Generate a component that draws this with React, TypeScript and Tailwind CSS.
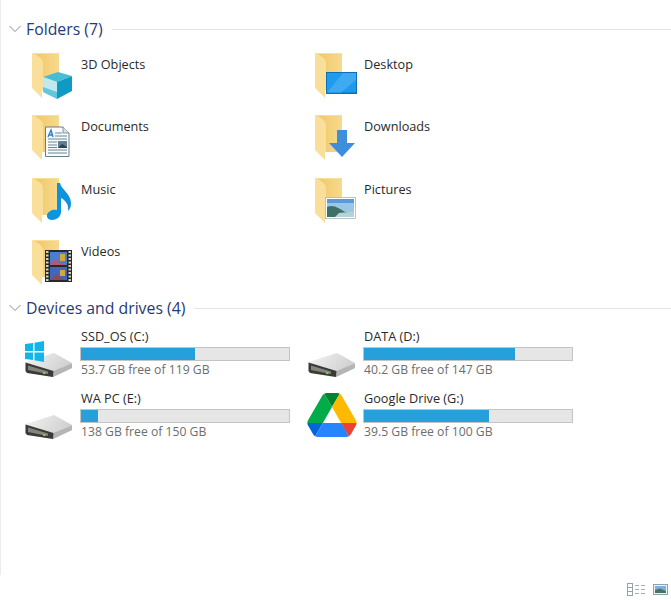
import React from "react";

function FolderBase() {
  return (
    <>
      <defs>
        <linearGradient id="panel" x1="0" y1="0" x2="1" y2="0">
          <stop offset="0" stopColor="#f0c768" />
          <stop offset="1" stopColor="#f7da8e" />
        </linearGradient>
      </defs>
      <path d="M2 3 H29 V40 H12 V48 L2 38 Z" fill="#f9df9a" />
      <path d="M5 4 H29 V40 H13 V13 C13 9 9 6.5 5 4 Z" fill="url(#panel)" />
    </>
  );
}

function Overlay({ kind }: { kind: string }) {
  switch (kind) {
    case "3d":
      return (
        <>
          <path d="M13 27 L28 22 L42 26 L27 32 Z" fill="#45bdd5" />
          <path d="M13 27 L27 32 L27 49 L13 42 Z" fill="#bfe8ef" />
          <path d="M27 32 L42 26 L42 41 L27 49 Z" fill="#0f9ac4" />
          <path d="M13 37 L27 42 L27 49 L13 42 Z" fill="#63c6da" />
        </>
      );
    case "desktop":
      return (
        <>
          <rect x="13" y="22" width="31" height="22" fill="#0f6fb5" />
          <rect x="14" y="23" width="29" height="19.5" fill="#1e9bed" />
          <path d="M14 42.5 L30 23 L43 23 L43 30 L28 42.5 Z" fill="#3daaf2" />
        </>
      );
    case "documents":
      return (
        <>
          <path d="M15.5 15 L33 15 L39 21 L39 44.5 L15.5 44.5 Z" fill="#f7fbfd" stroke="#5c6f7e" strokeWidth="0.9" />
          <path d="M33 15 L33 21 L39 21" fill="#d9e4ea" stroke="#5c6f7e" strokeWidth="0.7" />
          <path d="M18 25 L21 18 L23 25 M19 23 L22.5 23" fill="none" stroke="#2f7fc8" strokeWidth="1.4" />
          <path d="M25 21 H32 M25 24 H37 M18 27 H37 M18 38 H37 M18 41 H37" stroke="#6d8594" strokeWidth="1" />
          <path d="M18 30 H27 M18 33 H27 M18 35.5 H27" stroke="#6d8594" strokeWidth="1" />
          <rect x="28" y="29" width="9" height="7" fill="#5f7f96" />
          <path d="M28 36 L32 32 L37 35 L37 36 Z" fill="#2d4250" />
        </>
      );
    case "downloads":
      return <path d="M24 18 H34 V31 H42 L29 45 L16 31 H24 Z" fill="#3d8fdc" />;
    case "music":
      return (
        <path d="M27 8 L30 8 C31 14 41 19 41 28 C41 32 40 34 38 36 C39 29 35 25 31 23 L31 37 C31 42 26 45 22 45 C18 45 16.5 42 17 40 C18 36 23 34 27 35 Z" fill="#0d94df" />
      );
    case "videos":
      return (
        <>
          <rect x="15" y="13" width="27" height="32" fill="#27282a" />
          <rect x="20" y="15" width="17" height="13" fill="#4a7ed0" />
          <rect x="20" y="30" width="17" height="13" fill="#3f68bc" />
          <path d="M20 28 L25 22 L30 26 L37 28 Z" fill="#b25a74" />
          <rect x="30" y="17" width="5" height="7" fill="#d1aa3a" />
          <path d="M20 43 L26 37 L31 41 L37 43 Z" fill="#8e4a5b" />
          <rect x="30" y="33" width="5" height="6" fill="#d1aa3a" />
          {[14, 17.5, 21, 24.5, 28, 31.5, 35, 38.5, 42].map((y) => (
            <React.Fragment key={y}>
              <rect x="16" y={y} width="2.5" height="2" fill="#d8d2b8" />
              <rect x="38.5" y={y} width="2.5" height="2" fill="#d8d2b8" />
            </React.Fragment>
          ))}
        </>
      );
    case "pictures":
      return (
        <>
          <rect x="12.5" y="22.5" width="30" height="21" fill="#ffffff" stroke="#a9b6c0" strokeWidth="0.8" />
          <rect x="14" y="24" width="27" height="18" fill="#9cc6e4" />
          <path d="M14 24 H41 V28 H14 Z" fill="#5a9ad8" />
          <path d="M14 32 C20 29 26 33 32 37 L41 38 V42 H14 Z" fill="#3f7068" />
          <path d="M26 38 L41 36.5 V42 H22 Z" fill="#b5d2d8" />
        </>
      );
    default:
      return null;
  }
}

function FolderItem({ name, kind }: { name: string; kind: string }) {
  return (
    <div className="flex">
      <svg width="51" height="52" viewBox="0 0 51 52" className="shrink-0">
        <FolderBase />
        <Overlay kind={kind} />
      </svg>
      <span className="pt-[6px] text-[12.7px] leading-4 text-[#2a2a2a]">{name}</span>
    </div>
  );
}

function Drive() {
  return (
    <>
      <defs>
        <linearGradient id="driveTop" x1="0" y1="0" x2="1" y2="0.4">
          <stop offset="0" stopColor="#f4f4f4" />
          <stop offset="1" stopColor="#cfcfcf" />
        </linearGradient>
      </defs>
      <path d="M1.5 36 L30 27 L48 37 L48 42 L29 51 L1.5 46 Z" fill="url(#driveTop)" strokeLinejoin="round" />
      <path d="M29.5 45 L48 37.5 L48 42 L29 51 Z" fill="#b5b5b5" />
      <path d="M1.5 36.5 L29.5 45 L29 51 L3 47 L1.5 45 Z" fill="#3a3a38" />
      <path d="M4 39.5 L24 45.5 L24 48 L4 44 Z" fill="#85857c" />
      <rect x="19" y="46" width="2.5" height="2" fill="#7bc957" />
    </>
  );
}

function DriveIcon({ kind }: { kind: string }) {
  if (kind === "google") {
    return (
      <svg width="50" height="44" viewBox="0 0 87.3 78" className="mt-[5px] shrink-0">
        <path d="m6.6 66.85 3.85 6.65c.8 1.4 1.95 2.5 3.3 3.3l13.75-23.8h-27.5c0 1.55.4 3.1 1.2 4.5z" fill="#0066da" />
        <path d="m43.65 25-13.75-23.8c-1.35.8-2.5 1.9-3.3 3.3l-25.4 44a9.06 9.06 0 0 0 -1.2 4.5h27.5z" fill="#00ac47" />
        <path d="m73.55 76.8c1.35-.8 2.5-1.9 3.3-3.3l1.6-2.75 7.65-13.25c.8-1.4 1.2-2.95 1.2-4.5h-27.502l5.852 11.5z" fill="#ea4335" />
        <path d="m43.65 25 13.75-23.8c-1.35-.8-2.9-1.2-4.5-1.2h-18.5c-1.6 0-3.15.45-4.5 1.2z" fill="#00832d" />
        <path d="m59.8 53h-32.3l-13.75 23.8c1.35.8 2.9 1.2 4.5 1.2h50.8c1.6 0 3.15-.45 4.5-1.2z" fill="#2684fc" />
        <path d="m73.4 26.5-12.7-22c-.8-1.4-1.95-2.5-3.3-3.3l-13.75 23.8 16.15 28h27.45c0-1.55-.4-3.1-1.2-4.5z" fill="#ffba00" />
      </svg>
    );
  }
  return (
    <svg width="50" height="52" viewBox="0 0 50 52" className="shrink-0">
      <Drive />
      {kind === "windows" && (
        <g fill="#12b5e8">
          <path d="M1 18 L9 17 L9 25 L1 25 Z" />
          <path d="M10.5 16.7 L20 15 L20 25 L10.5 25 Z" />
          <path d="M1 26.5 L9 26.5 L9 34 L1 33 Z" />
          <path d="M10.5 26.5 L20 26.5 L20 36 L10.5 34.3 Z" />
        </g>
      )}
    </svg>
  );
}

function DriveItem({ name, free, pct, kind }: { name: string; free: string; pct: number; kind: string }) {
  return (
    <div className="flex">
      <div className="w-[56px] shrink-0">
        <DriveIcon kind={kind} />
      </div>
      <div className="w-[210px] shrink-0">
        <div className="pl-px pt-[2px] text-[12.7px] leading-4 text-[#2a2a2a]">{name}</div>
        <div className="mt-[3px] h-[14px] border border-[#c4c4c4] bg-[#e6e6e6]">
          <div className="h-full bg-[#26a0da]" style={{ width: `${pct}%` }} />
        </div>
        <div className="mt-[1px] pl-px text-[12.2px] leading-4 text-[#6d6d6d]">{free}</div>
      </div>
    </div>
  );
}

function SectionHeader({ title }: { title: string }) {
  return (
    <div className="flex h-5 items-center">
      <svg width="12" height="8" viewBox="0 0 12 8" className="ml-[8px] shrink-0">
        <path d="M0.5 1 L6 6.5 L11.5 1" fill="none" stroke="#8a8a8a" strokeWidth="1" />
      </svg>
      <span className="ml-[5px] whitespace-nowrap text-[15.8px] leading-5 text-[#263a78]">{title}</span>
      <div className="ml-[9px] h-px flex-1 bg-[#e4e4e4]" />
    </div>
  );
}

const folders = [
  ["3D Objects", "3d"],
  ["Desktop", "desktop"],
  ["Documents", "documents"],
  ["Downloads", "downloads"],
  ["Music", "music"],
  ["Pictures", "pictures"],
  ["Videos", "videos"],
];

const drives = [
  { name: "SSD_OS (C:)", free: "53.7 GB free of 119 GB", pct: 54.6, kind: "windows" },
  { name: "DATA (D:)", free: "40.2 GB free of 147 GB", pct: 72.7, kind: "drive" },
  { name: "WA PC (E:)", free: "138 GB free of 150 GB", pct: 8, kind: "drive" },
  { name: "Google Drive (G:)", free: "39.5 GB free of 100 GB", pct: 60, kind: "google" },
];

export default function App() {
  return (
    <div className="flex h-[600px] w-[671px] flex-col overflow-hidden bg-white font-['Open_Sans','Liberation_Sans',sans-serif]">
      <div className="h-[575px] border-l border-[#ececec] pt-[19px]">
        <SectionHeader title="Folders (7)" />
        <div className="mt-[11px] grid grid-cols-[283px_283px] grid-rows-[62.4px_62.4px_62.4px_61px] pl-[29px]">
          {folders.map(([name, kind]) => (
            <FolderItem key={name} name={name} kind={kind} />
          ))}
        </div>
        <SectionHeader title="Devices and drives (4)" />
        <div className="mt-[8px] grid grid-cols-[283px_283px] auto-rows-[62px] pl-[23px]">
          {drives.map((d) => (
            <DriveItem key={d.name} {...d} />
          ))}
        </div>
      </div>
      <div className="flex flex-1 items-start justify-end gap-[7px] pr-[3px] pt-[8px]">
        <svg width="19" height="13" viewBox="0 0 19 13">
          <rect x="0.5" y="0.5" width="5" height="4" fill="none" stroke="#95a1ab" />
          <rect x="0.5" y="4.5" width="5" height="4" fill="none" stroke="#95a1ab" />
          <rect x="0.5" y="8.5" width="5" height="4" fill="none" stroke="#95a1ab" />
          <path d="M8 2.5 H12 M14 2.5 H18 M8 6.5 H12 M14 6.5 H18 M8 10.5 H12 M14 10.5 H18" stroke="#a3aeb8" strokeWidth="1" />
        </svg>
        <svg width="15" height="13" viewBox="0 0 15 13">
          <rect x="0.5" y="1.5" width="14" height="10" fill="#eef2f5" stroke="#8fa0ad" />
          <rect x="2" y="3" width="11" height="7" fill="#7fb0d8" />
          <path d="M2 7 L7 5.5 L13 8 V10 H2 Z" fill="#4a7367" />
        </svg>
      </div>
    </div>
  );
}
